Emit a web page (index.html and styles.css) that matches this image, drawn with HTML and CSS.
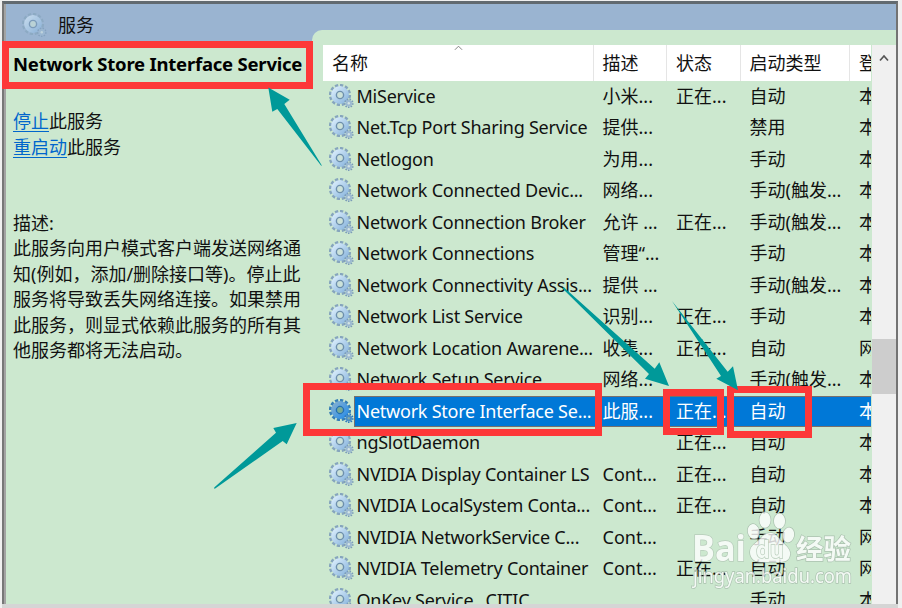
FILE: index.html
```html
<!DOCTYPE html>
<html lang="zh-CN">
<head>
<meta charset="utf-8">
<title>服务</title>
<link rel="stylesheet" href="styles.css">
</head>
<body>
<svg class="defs" width="0" height="0">
  <defs>
    <linearGradient id="steel" x1="0" y1="0" x2="1" y2="1"><stop offset="0" stop-color="#d6eafa"/><stop offset="1" stop-color="#8fb9df"/></linearGradient>
    <symbol id="gear" viewBox="0 0 25 25">
      <circle class="teeth" cx="11" cy="11" r="9.6" pathLength="60"/>
      <circle class="wheel" cx="11" cy="11" r="6.4"/>
      <circle class="hub" cx="11" cy="11" r="3.6"/>
      <circle class="teeth small" cx="19.8" cy="19.3" r="3.9" pathLength="36"/>
      <circle class="cog" cx="19.8" cy="19.3" r="3.2"/>
      <circle class="dot" cx="19.8" cy="19.3" r="1.2"/>
    </symbol>
  </defs>
</svg>
<div class="window">
  <header class="titlebar"><svg class="gear faded"><use href="#gear"/></svg><span>服务</span></header>
  <main class="content">
    <aside class="details">
      <h1>Network Store Interface Service</h1>
      <p class="actions"><a>停止</a>此服务<br><a>重启动</a>此服务</p>
      <p class="description">描述:<br>此服务向用户模式客户端发送网络通<br>知(例如，添加/删除接口等)。停止此<br>服务将导致丢失网络连接。如果禁用<br>此服务，则显式依赖此服务的所有其<br>他服务都将无法启动。</p>
    </aside>
    <section class="pane">
      <div class="list">
        <div class="head"><span>名称<svg class="sort" viewBox="0 0 10 6"><path d="M1 5L5 1L9 5"/></svg></span><span>描述</span><span>状态</span><span>启动类型</span><span>登</span></div>
        <div class="rows" id="rows"></div>
      </div>
      <div class="scrollbar"><svg class="up" viewBox="0 0 10 8"><path d="M1 6.5L5 2L9 6.5"/></svg><div class="thumb"></div></div>
    </section>
  </main>
</div>
<div class="mark title-mark"></div>
<div class="mark name-mark"></div>
<div class="mark state-mark"></div>
<div class="mark start-mark"></div>
<svg class="overlay" viewBox="0 0 902 608">
  <g fill="#009999">
    <path d="M268.3 87.5L289.7 99.7L284.3 104L322 165.7L321 165.5L277.3 109L272.3 111.7Z"/>
    <path d="M296.7 423L273.3 428L276 432.7L214.2 487.5L214.5 489L282.7 441L286.7 444.3Z"/>
    <path d="M669 386L659.3 362.3L654.7 368.7L563.5 287L562.5 288.5L649 374L645 378.7Z"/>
    <path d="M738 390.3L733 366.3L727.7 371.7L672 301L721 376L716.3 378.7Z"/>
  </g>
  <g class="watermark">
    <text class="brand" x="692" y="561" textLength="54" lengthAdjust="spacingAndGlyphs">Bai</text>
    <ellipse cx="765" cy="520" rx="5.6" ry="7.8"/>
    <ellipse cx="779.5" cy="521" rx="5.6" ry="7.5"/>
    <ellipse cx="753.5" cy="531.5" rx="5.7" ry="7.5" transform="rotate(-12 753.5 531.5)"/>
    <ellipse cx="788.5" cy="535" rx="5.6" ry="7.5" transform="rotate(12 788.5 535)"/>
    <path d="M771 533C776 533 778 538 782 542C788 547 791 551 790 555C789 561 785 562 778 562H761C754 562 750 558 750 552C750 545 757 543 761 538C764 534 767 533 771 533Z"/>
    <text class="du" x="756" y="558" textLength="28" lengthAdjust="spacingAndGlyphs">du</text>
    <text class="cn" x="796" y="559" textLength="55" lengthAdjust="spacingAndGlyphs">经验</text>
    <text class="url" x="693" y="583" textLength="159" lengthAdjust="spacingAndGlyphs">jingyan.baidu.com</text>
  </g>
</svg>
<script src="rows.js"></script>
</body>
</html>
```
FILE: styles.css
```css
* { box-sizing: border-box; }
body {
  margin: 0; width: 902px; height: 608px; overflow: hidden; background: #f0f0f0;
  font: 18px/26px "Noto Sans", "Noto Sans CJK SC", sans-serif; color: #111;
}
.defs { position: absolute; }
.window {
  margin: 1px 4px 0 2px; height: 603px; border: solid #777; border-width: 3px 2px 0 2px;
  border-top-color: #626a70; border-right-color: #737373;
  box-shadow: inset 2px 0 #a3a3a3, 0 4px #d5d5d5;
  display: flex; flex-direction: column; background: #9ab4d1; padding-left: 2px; overflow: hidden;
}
.titlebar { height: 26px; padding: 16px 0 0 16px; display: flex; align-items: center; gap: 11px; flex: none; }
.gear { width: 25px; height: 25px; flex: none; }
.teeth { fill: none; stroke: #86a5bd; stroke-width: 3; stroke-dasharray: 3.2 1.8; }
.teeth.small { stroke: #7b9bb8; stroke-width: 1.8; stroke-dasharray: 2.2 1.8; }
.wheel { fill: none; stroke: url(#steel); stroke-width: 5; }
.hub { fill: #cce2d9; stroke: #6d8fae; stroke-width: 1.4; }
.cog { fill: #9dbad2; }
.dot { fill: #d3e4e4; }
.faded { opacity: .65; }
.content { flex: 1; display: flex; min-height: 0; }
.details { width: 306px; margin-top: 12px; background: #cce8cf; padding-left: 7px; white-space: nowrap; }
h1 { margin: 9px 0 0; font: bold 18.5px/26px "Noto Sans", sans-serif; color: #000; letter-spacing: -.22px; }
p { margin: 0; }
.actions { margin-top: 31px; }
.actions a { color: #0066cc; text-decoration: underline; text-underline-offset: 3px; text-decoration-thickness: 1px; }
.description { margin-top: 50.5px; line-height: 25.6px; }
.pane { flex: 1; min-width: 0; display: flex; background: #cce8cf; border-top-left-radius: 10px; padding: 15px 0 0 11px; }
.list { width: 548px; flex: none; overflow: hidden; }
.head, .row { display: grid; grid-template-columns: 270.5px 73.5px 73.5px 109.5px 21px; white-space: nowrap; }
.head { height: 35.5px; background: #fff; line-height: 36px; }
.head span { padding-left: 9px; border-right: 1px solid #e5e5e5; position: relative; }
.head span:last-child { border: 0; }
.sort { position: absolute; left: 131px; top: 0; width: 9px; height: 6px; }
.sort path, .up path { fill: none; stroke: #777; stroke-width: 1; }
.row { height: 31.5px; line-height: 31.5px; }
.row > span { padding-left: 9px; overflow: hidden; }
.row .name { display: flex; align-items: center; padding-left: 6px; overflow: visible; }
.label { margin-left: -.5px; padding-left: 3px; height: 31.5px; line-height: 31.5px; flex: 1; letter-spacing: -.24px; }
.selected > span { background: #0078d7; color: #fff; border: solid #77706c; border-width: 1px 0; line-height: 29.5px; }
.selected .name { background: none; border: 0; }
.selected .label { background: #0078d7; border: 1px solid #77706c; border-right: 0; padding-left: 2px; line-height: 29.5px; }
.selected .gear { filter: brightness(.72) saturate(3.2); }
.scrollbar { flex: 1; background: #f0f0f0; display: flex; flex-direction: column; align-items: center; padding-top: 9px; margin-left: 1px; }
.up { width: 10px; height: 8px; }
.up path { stroke: #555; stroke-width: 1.7; }
.thumb { width: 100%; height: 55px; background: #cdcdcd; margin-top: 277px; }
.mark { position: absolute; border: 7px solid #fd3838; }
.title-mark { left: 2px; top: 41px; width: 311px; height: 48px; }
.name-mark { left: 303px; top: 383px; width: 299px; height: 53px; }
.state-mark { left: 663px; top: 389px; width: 61px; height: 46px; }
.start-mark { left: 727px; top: 386px; width: 85px; height: 52px; }
.overlay { position: absolute; left: 0; top: 0; width: 902px; height: 608px; }
.watermark { fill: #fff; stroke: #a3b8a8; stroke-width: 1.4; opacity: .8; paint-order: stroke; }
.brand { font: bold 35px "Open Sans", sans-serif; stroke: #b0c4b4; }
.du { font: bold 23px "Open Sans", sans-serif; fill: #fff; stroke: #b5c8b8; }
.cn { font: bold 27px "Noto Sans CJK SC", sans-serif; }
.url { font: 19px "Noto Sans", sans-serif; }
```
FILE: rows.js
```js
const services = [
  ["MiService", "小米...", "正在...", "自动", "本"],
  ["Net.Tcp Port Sharing Service", "提供...", "", "禁用", "本"],
  ["Netlogon", "为用...", "", "手动", "本"],
  ["Network Connected Devic...", "网络...", "", "手动(触发...", "本"],
  ["Network Connection Broker", "允许 ...", "正在...", "手动(触发...", "本"],
  ["Network Connections", "管理“...", "", "手动", "本"],
  ["Network Connectivity Assis...", "提供 ...", "", "手动(触发...", "本"],
  ["Network List Service", "识别...", "正在...", "手动", "本"],
  ["Network Location Awarene...", "收集...", "正在...", "自动", "网"],
  ["Network Setup Service", "网络...", "", "手动(触发...", "本"],
  ["Network Store Interface Se...", "此服...", "正在...", "自动", "本"],
  ["ngSlotDaemon", "", "正在...", "自动", "本"],
  ["NVIDIA Display Container LS", "Cont...", "正在...", "自动", "本"],
  ["NVIDIA LocalSystem Conta...", "Cont...", "正在...", "自动", "本"],
  ["NVIDIA NetworkService C...", "Cont...", "", "手动", "网"],
  ["NVIDIA Telemetry Container", "Cont...", "正在...", "自动", "网"],
  ["OnKey Service _CITIC", "", "", "手动", "本"]
];
document.getElementById("rows").innerHTML = services.map(([name, ...cells], i) =>
  `<div class="row${i === 10 ? " selected" : ""}"><span class="name"><svg class="gear"><use href="#gear"/></svg><span class="label">${name}</span></span>${cells.map(c => `<span>${c}</span>`).join("")}</div>`
).join("");
```
